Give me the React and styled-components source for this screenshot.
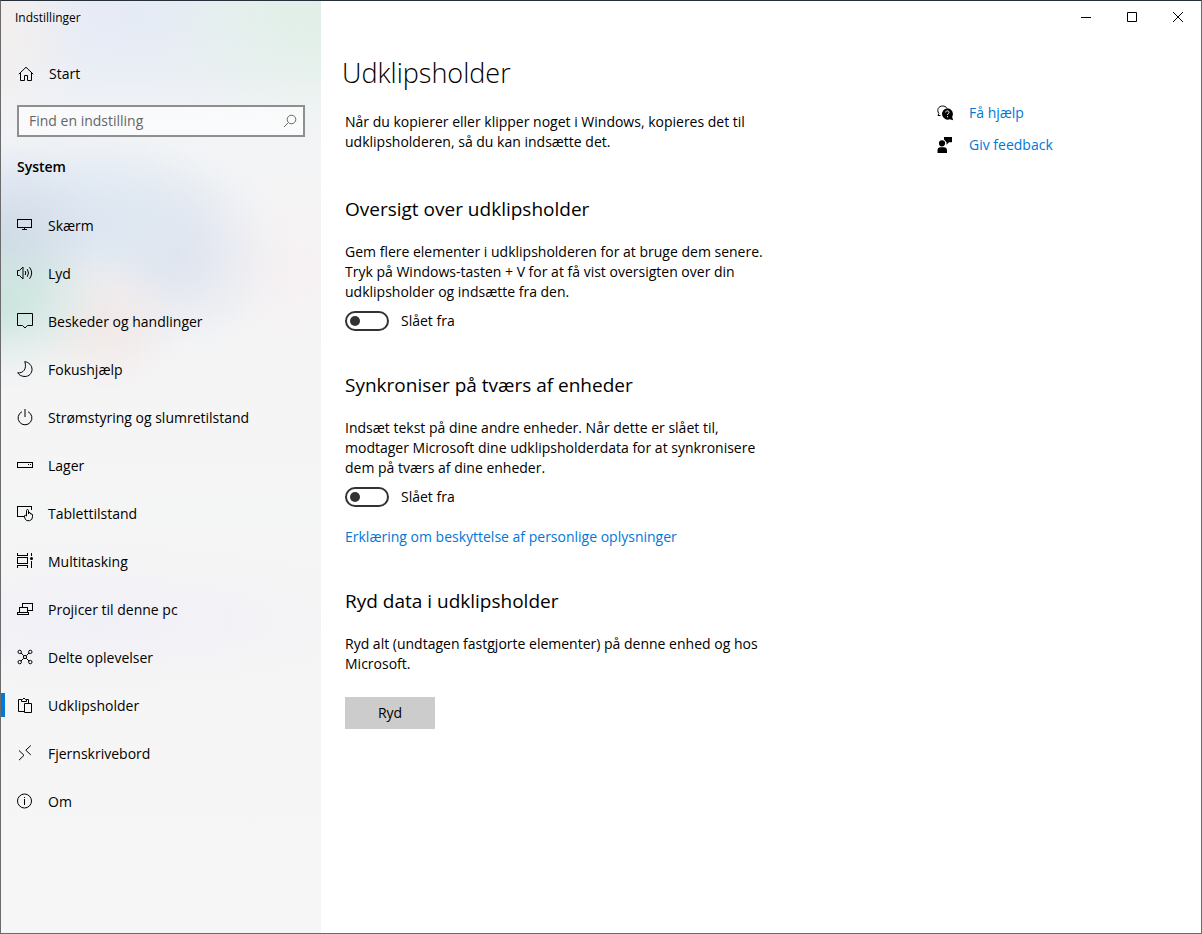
import React, { useState } from 'react';
import styled, { createGlobalStyle } from 'styled-components';

const GlobalStyle = createGlobalStyle`
  * {
    box-sizing: border-box;
  }

  body {
    margin: 0;
    background: #fff;
    color: #000;
    font-family: 'Open Sans', 'Noto Sans', sans-serif;
    font-size: 14px;
    line-height: 20px;
  }

  button,
  input {
    font: inherit;
    color: inherit;
  }
`;

// soft colour spot for the acrylic sidebar
const glow = (size, at, rgb, alpha) =>
  `radial-gradient(ellipse ${size} at ${at}, rgba(${rgb}, ${alpha}), rgba(${rgb}, ${alpha * 0.8}) 25%, rgba(${rgb}, ${
    alpha * 0.4
  }) 55%, rgba(${rgb}, ${alpha * 0.1}) 80%, rgba(${rgb}, 0))`;

const Window = styled.div`
  display: flex;
  min-height: 100vh;
  border: 1px solid #6b6b6b;
  border-top-color: #26303d;
`;

const Sidebar = styled.aside`
  flex: 0 0 320px;
  display: flex;
  flex-direction: column;
  background:
    ${glow('120px 90px', '0 300px', '200, 228, 220', 0.9)},
    ${glow('90px 80px', '105px 325px', '242, 232, 231', 0.9)},
    ${glow('120px 100px', '0 240px', '206, 216, 230', 0.9)},
    ${glow('150px 90px', '100px 220px', '220, 230, 241', 0.9)},
    ${glow('120px 110px', '175px 255px', '222, 227, 238', 0.9)},
    ${glow('110px 110px', '290px 270px', '246, 241, 242', 0.9)},
    ${glow('220px 80px', '40px 190px', '230, 236, 246', 0.9)},
    ${glow('90px 140px', '0 20px', '243, 239, 238', 1)},
    ${glow('200px 130px', '320px 15px', '224, 239, 231', 1)},
    ${glow('260px 140px', '125px 15px', '229, 234, 245', 1)},
    ${glow('340px 80px', '90px 620px', '240, 240, 247', 1)},
    linear-gradient(#f2f4f5, #f5f5f5 60%, #f6f6f6);
`;

const AppTitle = styled.div`
  padding: 7px 14px;
  font-size: 12px;
`;

const NavLink = styled.a`
  position: relative;
  display: flex;
  align-items: center;
  gap: 15px;
  height: 48px;
  padding-left: 16px;
  color: #000;
  text-decoration: none;

  &[aria-current='page']::before {
    content: '';
    position: absolute;
    left: 0;
    top: 12px;
    width: 4px;
    height: 24px;
    background: #0078d7;
  }
`;

const NavLabel = styled.span`
  padding-top: 2px;
`;

const HomeLink = styled(NavLink)`
  margin-top: 15px;
  padding-left: 17px;
`;

const NavList = styled.ul`
  margin: 24px 0 0;
  padding: 0;
  list-style: none;
`;

const SearchBox = styled.label`
  display: flex;
  align-items: center;
  height: 32px;
  margin: 7px 16px 20px;
  padding: 0 5px 0 10px;
  border: 2px solid #8f8f8f;
  background: rgba(255, 255, 255, 0.6);
  color: #666;
`;

const SearchInput = styled.input`
  flex: 1;
  min-width: 0;
  padding: 0;
  border: 0;
  outline: 0;
  background: transparent;

  &::placeholder {
    color: #666;
    opacity: 1;
  }
`;

const Category = styled.h3`
  margin: 0 16px;
  font-size: 14px;
  font-weight: 600;
  line-height: 20px;
`;

const Svg = styled.svg`
  flex: none;
  width: 16px;
  height: 16px;
  fill: none;
  stroke: currentColor;
  overflow: visible;
`;

const Main = styled.main`
  flex: 1;
  min-width: 0;
  display: flex;
  flex-direction: column;
`;

const Caption = styled.div`
  display: flex;
  justify-content: flex-end;
  height: 32px;
`;

const CaptionButton = styled.button`
  display: grid;
  place-items: center;
  width: 46px;
  padding: 0;
  border: 0;
  background: none;
`;

const PageTitle = styled.h1`
  margin: 20px 21px 19px;
  font-size: 27px;
  font-weight: 300;
  line-height: 40px;
`;

const Columns = styled.div`
  display: flex;
  gap: 160px;
  padding: 0 24px;
`;

const Content = styled.div`
  flex: 0 1 432px;
`;

const Text = styled.p`
  margin: 0;
`;

const Intro = styled(Text)`
  padding-bottom: 3px;
`;

const Section = styled.section`
  margin-top: 40px;
`;

const SectionTitle = styled.h2`
  margin: 0 0 19px;
  font-size: 19px;
  font-weight: 400;
  line-height: 28px;
`;

const ToggleLabel = styled.label`
  display: flex;
  align-items: center;
  gap: 12px;
  width: fit-content;
  margin-top: 9px;
`;

const ToggleInput = styled.input`
  appearance: none;
  display: flex;
  align-items: center;
  width: 44px;
  height: 20px;
  margin: 0;
  padding: 0 3px;
  border: 2px solid #333;
  border-radius: 10px;

  &::before {
    content: '';
    width: 10px;
    height: 10px;
    border-radius: 50%;
    background: #333;
  }

  &:checked {
    justify-content: flex-end;
    border-color: #0078d7;
    background: #0078d7;
  }

  &:checked::before {
    background: #fff;
  }
`;

const TextLink = styled.a`
  color: #0078d7;
  text-decoration: none;
`;

const PrivacyLink = styled(TextLink)`
  display: block;
  margin-top: 20px;
`;

const ClearButton = styled.button`
  width: 90px;
  height: 32px;
  margin-top: 23px;
  padding: 0;
  border: 0;
  background: #ccc;
`;

const Help = styled.nav`
  flex: none;
  display: flex;
  flex-direction: column;
  gap: 12px;
  margin-top: -9px;
`;

const HelpRow = styled.div`
  display: flex;
  align-items: center;
  gap: 16px;
`;

const icons = {
  home: <path d="M.8 8.2 8 1.200l7.200 7M2.500 7v7.500h4v-5h3v5h4V7" />,
  display: <path shapeRendering="crispEdges" d="M.5 2.500h14v8H.5zM7.500 11v1M5 12.500h5" />,
  sound: (
    <>
      <path d="M.5 5.500h2l3.500-3.500v12l-3.500-3.500h-2z" />
      <path d="M8.200 6q1.100 2 0 4M10.300 4.200q2.400 3.800 0 7.600M12.500 2.200q4.400 5.800 0 11.600" />
    </>
  ),
  message: <path d="M.5.5h15v12h-5L8 15l-2.500-2.500h-5z" />,
  moon: <path d="M7.800.6C12 1.300 15 4.500 15 8.400c0 4-3 7.100-7 7.100-3.200 0-5.800-1.300-7.300-3.700C6 12.500 10.200 8 7.800.6z" />,
  power: (
    <>
      <path d="M5 2.700a6.900 6.900 0 1 0 6 0" />
      <path stroke="#777" strokeWidth="2" d="M8 0v8" />
    </>
  ),
  storage: <path shapeRendering="crispEdges" d="M.5 5.500h15v5H.5zM11 7.500h1M13 7.500h1" />,
  tablet: (
    <>
      <path shapeRendering="crispEdges" d="M7 11.500H.5v-10h14V5" />
      <path d="M9.500 11V5.500c0-1.300 2-1.300 2 0V9V7.500q2-.6 2 1.500q2-.6 2 1v1.800a4 4 0 0 1-7.500 2L7.300 11c.2-1 1.400-1 2.200 0" />
    </>
  ),
  multitask: (
    <>
      <path shapeRendering="crispEdges" d="M.5 0v2.500h10V0M.5 4.500h10v6H.5zM.5 15v-2.500h10V15M14.500 0v3M14.500 8v7" />
      <circle cx="14.500" cy="5.500" r="1.500" fill="currentColor" stroke="none" />
    </>
  ),
  project: <path shapeRendering="crispEdges" d="M5.500 6V2.500h10v7H11M2.500 11V6.500h8V11M.5 11.500h11v2H.5z" />,
  shared: (
    <>
      <path d="M4 4l2.700 2.700M12 4 9.300 6.700M4 12l2.700-2.700M12 12 9.300 9.300" />
      <circle cx="2.700" cy="2.900" r="1.700" />
      <circle cx="13.300" cy="2.900" r="1.700" />
      <circle cx="2.700" cy="13.100" r="1.700" />
      <circle cx="13.300" cy="13.100" r="1.700" />
      <circle cx="8" cy="8" r="1.600" />
    </>
  ),
  clipboard: (
    <>
      <path d="M7 14.500H1.500v-12h3M9.500 2.500h2V6M7.500 6.500h7v9h-7z" />
      <path d="M4.500 2.500h1q1.500-3 3 0h1v2h-5z" />
    </>
  ),
  remote: <path d="M2 5.500 7 10.300l-5 4.900M13.800.5l-5 4.700 5 4.700" />,
  info: (
    <>
      <circle cx="7.500" cy="8" r="7" />
      <path shapeRendering="crispEdges" d="M7.500 4v1M7.500 6v6" />
    </>
  ),
  search: (
    <>
      <circle cx="9.500" cy="6.500" r="4.300" />
      <path d="M6.400 9.600 2 14" />
    </>
  ),
  help: (
    <>
      <path d="M3.500 10.500H1l.8-2C-.8 4.500 2 1 5.500 1 7.500 1 9 1.800 10 3.200" />
      <path
        fill="currentColor"
        stroke="none"
        d="M10.300 3.300a5.700 5.700 0 0 1 4.900 8.600l.9 3.300-3.300-.9A5.700 5.700 0 1 1 10.300 3.300z"
      />
      <path stroke="#fff" d="M8.700 7.400c.1-2.100 3.400-2 3.300 0 0 1.200-1.500 1.200-1.500 2.600M10.500 11.200v1.100" />
    </>
  ),
  feedback: (
    <path
      fill="currentColor"
      stroke="none"
      d="M5 3.200a3.100 3.100 0 1 1 0 6.200 3.100 3.100 0 0 1 0-6.200zM.5 16v-2.500c0-2 1.200-3.200 3-3.200h3.500c1.800 0 3 1.200 3 3.200V16zM7 0h8v5.300h-3L9.500 7.700V5.300L7 2.500z"
    />
  ),
};

const Icon = ({ name }) => (
  <Svg viewBox="0 0 16 16" aria-hidden="true">
    {icons[name]}
  </Svg>
);

const navItems = [
  { icon: 'display', label: 'Skærm' },
  { icon: 'sound', label: 'Lyd' },
  { icon: 'message', label: 'Beskeder og handlinger' },
  { icon: 'moon', label: 'Fokushjælp' },
  { icon: 'power', label: 'Strømstyring og slumretilstand' },
  { icon: 'storage', label: 'Lager' },
  { icon: 'tablet', label: 'Tablettilstand' },
  { icon: 'multitask', label: 'Multitasking' },
  { icon: 'project', label: 'Projicer til denne pc' },
  { icon: 'shared', label: 'Delte oplevelser' },
  { icon: 'clipboard', label: 'Udklipsholder' },
  { icon: 'remote', label: 'Fjernskrivebord' },
  { icon: 'info', label: 'Om' },
];

const captionIcons = [
  { label: 'Minimer', path: 'M3 8.500h10' },
  { label: 'Maksimer', path: 'M3.500 3.500h9v9h-9z' },
  { label: 'Luk', path: 'M3 3l10 10M13 3 3 13' },
];

const Toggle = () => {
  const [on, setOn] = useState(false);

  return (
    <ToggleLabel>
      <ToggleInput type="checkbox" checked={on} onChange={(e) => setOn(e.target.checked)} />
      {on ? 'Slået til' : 'Slået fra'}
    </ToggleLabel>
  );
};

const App = () => {
  const [current, setCurrent] = useState('Udklipsholder');
  const [query, setQuery] = useState('');

  return (
    <Window>
      <GlobalStyle />
      <Sidebar>
        <AppTitle>Indstillinger</AppTitle>
        <HomeLink href="#start">
          <Icon name="home" />
          Start
        </HomeLink>
        <SearchBox>
          <SearchInput
            type="text"
            aria-label="Find en indstilling"
            placeholder="Find en indstilling"
            value={query}
            onChange={(e) => setQuery(e.target.value)}
          />
          <Icon name="search" />
        </SearchBox>
        <Category>System</Category>
        <NavList>
          {navItems.map(({ icon, label }) => (
            <li key={label}>
              <NavLink
                href={`#${icon}`}
                aria-current={label === current ? 'page' : undefined}
                onClick={() => setCurrent(label)}
              >
                <Icon name={icon} />
                <NavLabel>{label}</NavLabel>
              </NavLink>
            </li>
          ))}
        </NavList>
      </Sidebar>
      <Main>
        <Caption>
          {captionIcons.map(({ label, path }) => (
            <CaptionButton key={label} type="button" aria-label={label}>
              <Svg viewBox="0 0 16 16">
                <path d={path} />
              </Svg>
            </CaptionButton>
          ))}
        </Caption>
        <PageTitle>Udklipsholder</PageTitle>
        <Columns>
          <Content>
            <Intro>
              Når du kopierer eller klipper noget i Windows, kopieres det til udklipsholderen, så du kan indsætte det.
            </Intro>
            <Section>
              <SectionTitle>Oversigt over udklipsholder</SectionTitle>
              <Text>
                Gem flere elementer i udklipsholderen for at bruge dem senere. Tryk på Windows-tasten + V for at få
                vist oversigten over din udklipsholder og indsætte fra den.
              </Text>
              <Toggle />
            </Section>
            <Section>
              <SectionTitle>Synkroniser på tværs af enheder</SectionTitle>
              <Text>
                Indsæt tekst på dine andre enheder. Når dette er slået til, modtager Microsoft dine udklipsholderdata
                for at synkronisere dem på tværs af dine enheder.
              </Text>
              <Toggle />
              <PrivacyLink href="#privacy">Erklæring om beskyttelse af personlige oplysninger</PrivacyLink>
            </Section>
            <Section>
              <SectionTitle>Ryd data i udklipsholder</SectionTitle>
              <Text>Ryd alt (undtagen fastgjorte elementer) på denne enhed og hos Microsoft.</Text>
              <ClearButton type="button">Ryd</ClearButton>
            </Section>
          </Content>
          <Help>
            <HelpRow>
              <Icon name="help" />
              <TextLink href="#help">Få hjælp</TextLink>
            </HelpRow>
            <HelpRow>
              <Icon name="feedback" />
              <TextLink href="#feedback">Giv feedback</TextLink>
            </HelpRow>
          </Help>
        </Columns>
      </Main>
    </Window>
  );
};

export default App;
